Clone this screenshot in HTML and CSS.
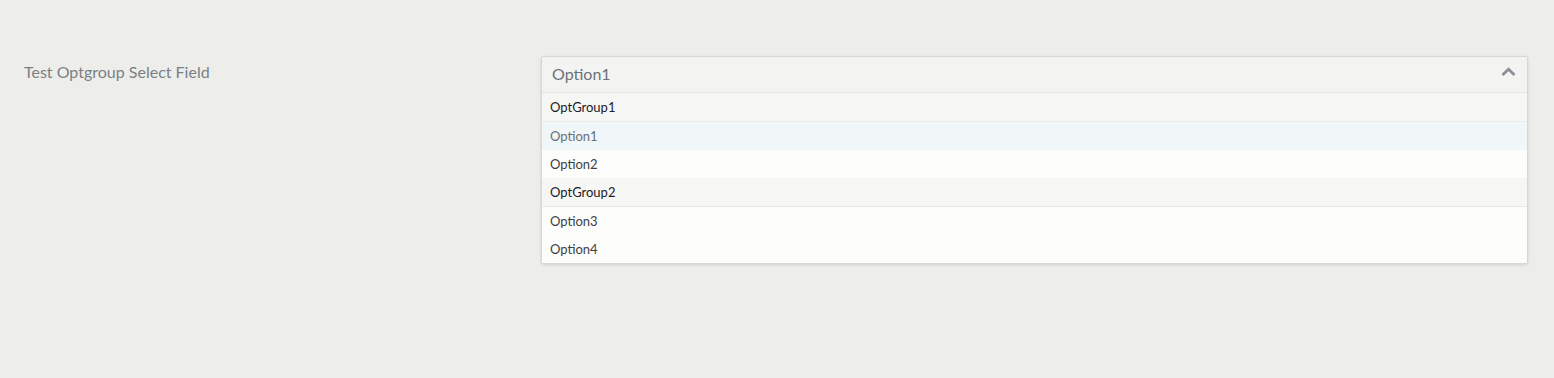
FILE: index.html
```html
<!DOCTYPE html>
<html>
<head>
<meta charset="utf-8">
<link rel="stylesheet" href="styles.css">
</head>
<body>
<div class="page">
  <div class="field">
    <label class="field-label">Test Optgroup Select Field</label>
    <div class="select">
      <div class="select-head">
        <span class="select-value">Option1</span>
        <svg class="chevron" width="15" height="10" viewBox="0 0 15 10"><path d="M1.5 8 L7.5 2.2 L13.5 8" fill="none" stroke="#8a9097" stroke-width="2.8"/></svg>
      </div>
      <ul class="menu">
        <li class="group">OptGroup1</li>
        <li class="opt active">Option1</li>
        <li class="opt">Option2</li>
        <li class="group">OptGroup2</li>
        <li class="opt">Option3</li>
        <li class="opt">Option4</li>
      </ul>
    </div>
  </div>
</div>
</body>
</html>
```

FILE: styles.css
```css
html, body {
  margin: 0;
  padding: 0;
  background: #edeeea;
  font-family: Lato, "Open Sans", sans-serif;
}
.page {
  padding: 56px 26px 0 24px;
  height: 378px;
  box-sizing: border-box;
}
.field {
  display: grid;
  grid-template-columns: 517px 1fr;
  align-items: start;
}
.field-label {
  font-size: 16px;
  color: #7b8086;
  padding-top: 6px;
  line-height: 20px;
}
.select {
  border: 1px solid #d6d8d4;
  border-radius: 2px;
  background: #fcfcfa;
  box-shadow: 0 1px 3px rgba(0,0,0,0.12);
}
.select-head {
  display: flex;
  align-items: center;
  justify-content: space-between;
  height: 36px;
  padding: 0 11px 2px 10px;
  box-sizing: border-box;
  background: #f3f4f1;
  border-bottom: 1px solid #e3e5e1;
}
.select-value {
  font-size: 16px;
  color: #6d7279;
}
.chevron {
  display: block;
  margin-top: -3px;
}
.menu {
  list-style: none;
  margin: 0;
  padding: 0;
}
.menu li {
  font-size: 13px;
  height: 28px;
  line-height: 28px;
  padding: 0 8px;
  box-sizing: border-box;
}
.group {
  background: #f6f7f5;
  color: #1e2124;
  border-bottom: 1px solid #e8eae7;
  height: 29px !important;
}
.opt {
  color: #3c4045;
  background: #fdfdfb;
}
.opt.active {
  background: #f1f6f9;
  color: #6a7078;
}
```
